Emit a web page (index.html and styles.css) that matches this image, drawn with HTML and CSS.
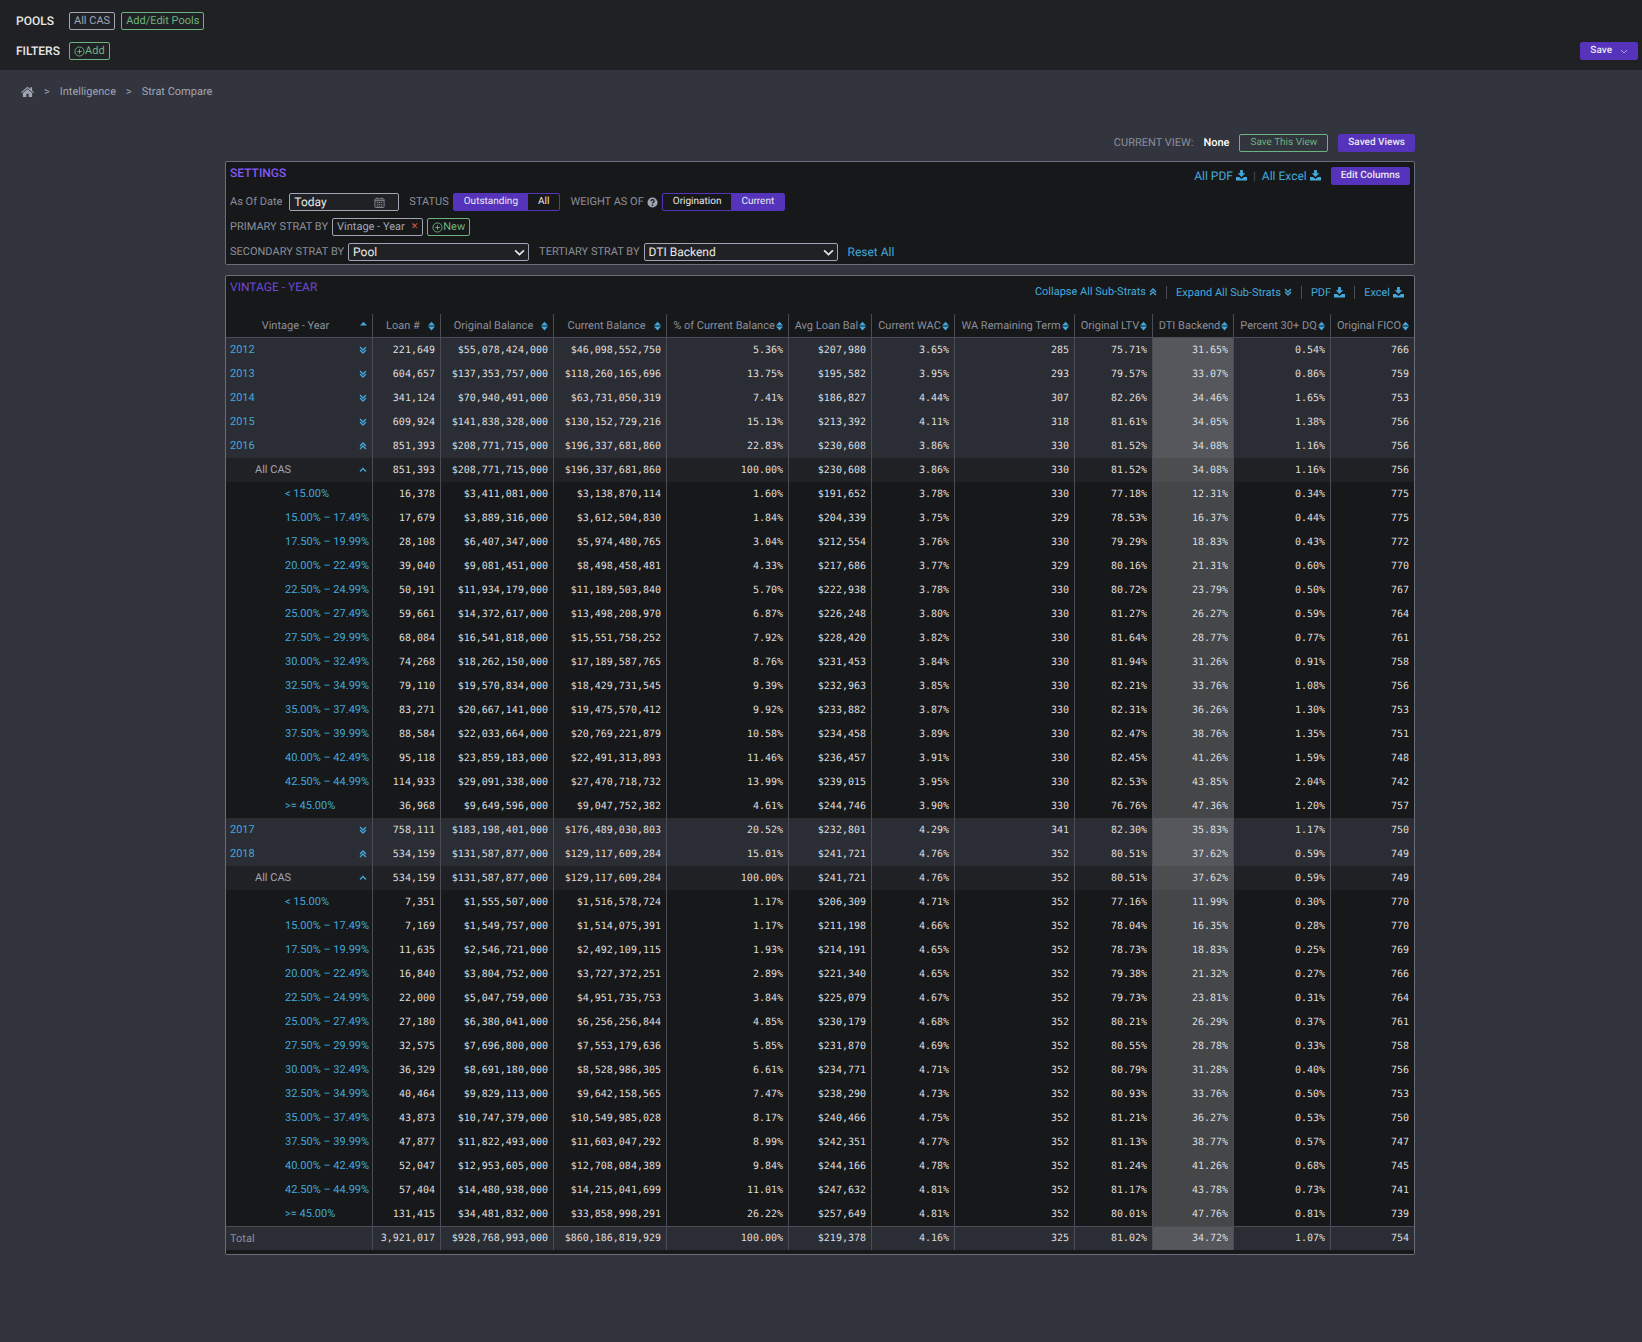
FILE: index.html
```html
<!DOCTYPE html>
<html lang="en">
<head>
    <meta charset="UTF-8">
    <meta name="viewport" content="width=device-width, initial-scale=1.0">
    <title>Strat Compare</title>
    <link rel="stylesheet" href="styles.css">
    <script src="strats.js" defer></script>
</head>
<body>
    <svg class="sprite" aria-hidden="true">
        <symbol id="plus" viewBox="0 0 12 12"><circle cx="6" cy="6" r="5" fill="none" stroke="currentColor"/><path d="M6 3.500v5M3.500 6h5" stroke="currentColor"/></symbol>
        <symbol id="home" viewBox="0 0 14 12"><path d="M7 .3L0 6.200l.8 1L7 2l6.200 5.200.8-1-2.100-1.800V1H10v1.800zM7 3L2 7.200V11.500h3.800V8h2.400v3.500H12V7.200z" fill="currentColor"/></symbol>
        <symbol id="download" viewBox="0 0 12 12"><path d="M4.500 0h3v3.500h2.700L6 7.700 1.800 3.500h2.700zM0 7.500h3.200L6 9.800l2.800-2.300H12v4H0z" fill="currentColor"/></symbol>
        <symbol id="calendar" viewBox="0 0 12 12"><path d="M2 2h8a1 1 0 0 1 1 1v7.500a1 1 0 0 1-1 1H2a1 1 0 0 1-1-1V3a1 1 0 0 1 1-1zM3.500.5v2M8.500.5v2M1 4h10" fill="none" stroke="currentColor"/><path d="M3 6h6M3 8h6M3 10h6" stroke="currentColor" stroke-dasharray="1.600 .6"/></symbol>
        <symbol id="help" viewBox="0 0 12 12"><circle cx="6" cy="6" r="5.500" fill="currentColor"/><path d="M4.300 4.600C4.300 2.400 7.800 2.500 7.800 4.500 7.800 5.800 6 5.700 6 7.200M6 8.200v1.500" fill="none" stroke="#17181a" stroke-width="1.400"/></symbol>
        <symbol id="down" viewBox="0 0 10 10"><path d="M1 3l4 4 4-4" fill="none" stroke="currentColor" stroke-width="1.500"/></symbol>
        <symbol id="down-thin" viewBox="0 0 8 8"><path d="M1 3l3 3 3-3" fill="none" stroke="currentColor"/></symbol>
        <symbol id="up1" viewBox="0 0 8 8"><path d="M1 5.500l3-3 3 3" fill="none" stroke="currentColor" stroke-width="1.300"/></symbol>
        <symbol id="up2" viewBox="0 0 8 8"><path d="M1 4l3-3 3 3M1 7l3-3 3 3" fill="none" stroke="currentColor" stroke-width="1.300"/></symbol>
        <symbol id="down2" viewBox="0 0 8 8"><path d="M1 1l3 3 3-3M1 4l3 3 3-3" fill="none" stroke="currentColor" stroke-width="1.300"/></symbol>
        <symbol id="sort" viewBox="0 0 8 10"><path d="M4 0l4 4.300H0zM4 10L0 5.700h8z" fill="currentColor"/></symbol>
        <symbol id="sort-up" viewBox="0 0 8 10"><path d="M4 0l4 4.300H0z" fill="currentColor"/></symbol>
    </svg>

    <header class="topbar">
        <div class="topbar-row">
            <span class="topbar-label">POOLS</span>
            <button class="btn chip">All CAS</button>
            <button class="btn outline">Add/Edit Pools</button>
        </div>
        <div class="topbar-row">
            <span class="topbar-label">FILTERS</span>
            <button class="btn outline"><svg class="icon"><use href="#plus"/></svg>Add</button>
            <button class="btn solid save">Save <svg class="icon tiny"><use href="#down-thin"/></svg></button>
        </div>
    </header>

    <nav class="breadcrumb">
        <a href="#" aria-label="Home"><svg class="home"><use href="#home"/></svg></a>
        <span>&gt;</span>
        <a href="#">Intelligence</a>
        <span>&gt;</span>
        <a href="#">Strat Compare</a>
    </nav>

    <div class="page">
    <main>
        <div class="view-row">
            <span>CURRENT VIEW:</span>
            <strong>None</strong>
            <button class="btn outline wide">Save This View</button>
            <button class="btn solid">Saved Views</button>
        </div>

        <section class="panel settings">
            <div class="panel-head">
                <h1>SETTINGS</h1>
                <div class="exports">
                    <a href="#">All PDF <svg class="icon"><use href="#download"/></svg></a>
                    <span class="bar">|</span>
                    <a href="#">All Excel <svg class="icon"><use href="#download"/></svg></a>
                    <button class="btn solid">Edit Columns</button>
                </div>
            </div>

            <div class="field-row">
                <div class="field date">
                    <label for="as-of">As Of Date</label>
                    <span class="control">
                        <input id="as-of" type="text" value="Today">
                        <svg class="icon"><use href="#calendar"/></svg>
                    </span>
                </div>
                <fieldset class="field">
                    <legend>STATUS</legend>
                    <span class="toggle">
                        <label><input type="radio" name="status" checked>Outstanding</label>
                        <label><input type="radio" name="status">All</label>
                    </span>
                </fieldset>
                <fieldset class="field">
                    <legend>WEIGHT AS OF <svg class="icon"><use href="#help"/></svg></legend>
                    <span class="toggle">
                        <label><input type="radio" name="weight">Origination</label>
                        <label><input type="radio" name="weight" checked>Current</label>
                    </span>
                </fieldset>
            </div>

            <div class="field-row">
                <div class="field">
                    <span>PRIMARY STRAT BY</span>
                    <button class="btn chip">Vintage - Year <span class="remove">✕</span></button>
                    <button class="btn outline"><svg class="icon"><use href="#plus"/></svg>New</button>
                </div>
            </div>

            <div class="field-row">
                <div class="field">
                    <label for="secondary">SECONDARY STRAT BY</label>
                    <span class="control secondary">
                        <select id="secondary"><option>Pool</option></select>
                        <svg class="icon"><use href="#down"/></svg>
                    </span>
                </div>
                <div class="field">
                    <label for="tertiary">TERTIARY STRAT BY</label>
                    <span class="control tertiary">
                        <select id="tertiary"><option>DTI Backend</option></select>
                        <svg class="icon"><use href="#down"/></svg>
                    </span>
                </div>
                <a class="reset" href="#">Reset All</a>
            </div>
        </section>

        <section class="panel results">
            <div class="panel-head">
                <h2>VINTAGE - YEAR</h2>
                <div class="actions">
                    <a href="#">Collapse All Sub-Strats <svg class="icon tiny"><use href="#up2"/></svg></a>
                    <a href="#">Expand All Sub-Strats <svg class="icon tiny"><use href="#down2"/></svg></a>
                    <a href="#">PDF <svg class="icon"><use href="#download"/></svg></a>
                    <a href="#">Excel <svg class="icon"><use href="#download"/></svg></a>
                </div>
            </div>

            <table>
                <colgroup>
                    <col class="c-name"><col class="c-loan"><col class="c-balance"><col class="c-balance">
                    <col class="c-share"><col class="c-avg"><col class="c-avg"><col class="c-term">
                    <col class="c-ltv"><col class="c-dti"><col class="c-dq"><col class="c-fico">
                </colgroup>
                <thead><tr></tr></thead>
                <tbody></tbody>
                <tfoot></tfoot>
            </table>
        </section>
    </main>
    </div>
</body>
</html>
```
FILE: strats.js
```js
const $ = el => document.querySelector(el)

const columns = ['Vintage - Year', 'Loan #', 'Original Balance', 'Current Balance', '% of Current Balance', 'Avg Loan Bal',
    'Current WAC', 'WA Remaining Term', 'Original LTV', 'DTI Backend', 'Percent 30+ DQ', 'Original FICO']

// type | name | loans | original | current | share | avg | wac | term | ltv | dti | dq | fico
const data = `
year-closed|2012|221,649|55,078,424,000|46,098,552,750|5.36|207,980|3.65|285|75.71|31.65|0.54|766
year-closed|2013|604,657|137,353,757,000|118,260,165,696|13.75|195,582|3.95|293|79.57|33.07|0.86|759
year-closed|2014|341,124|70,940,491,000|63,731,050,319|7.41|186,827|4.44|307|82.26|34.46|1.65|753
year-closed|2015|609,924|141,838,328,000|130,152,729,216|15.13|213,392|4.11|318|81.61|34.05|1.38|756
year-open|2016|851,393|208,771,715,000|196,337,681,860|22.83|230,608|3.86|330|81.52|34.08|1.16|756
pool|All CAS|851,393|208,771,715,000|196,337,681,860|100.00|230,608|3.86|330|81.52|34.08|1.16|756
range|< 15.00%|16,378|3,411,081,000|3,138,870,114|1.60|191,652|3.78|330|77.18|12.31|0.34|775
range|15.00% – 17.49%|17,679|3,889,316,000|3,612,504,830|1.84|204,339|3.75|329|78.53|16.37|0.44|775
range|17.50% – 19.99%|28,108|6,407,347,000|5,974,480,765|3.04|212,554|3.76|330|79.29|18.83|0.43|772
range|20.00% – 22.49%|39,040|9,081,451,000|8,498,458,481|4.33|217,686|3.77|329|80.16|21.31|0.60|770
range|22.50% – 24.99%|50,191|11,934,179,000|11,189,503,840|5.70|222,938|3.78|330|80.72|23.79|0.50|767
range|25.00% – 27.49%|59,661|14,372,617,000|13,498,208,970|6.87|226,248|3.80|330|81.27|26.27|0.59|764
range|27.50% – 29.99%|68,084|16,541,818,000|15,551,758,252|7.92|228,420|3.82|330|81.64|28.77|0.77|761
range|30.00% – 32.49%|74,268|18,262,150,000|17,189,587,765|8.76|231,453|3.84|330|81.94|31.26|0.91|758
range|32.50% – 34.99%|79,110|19,570,834,000|18,429,731,545|9.39|232,963|3.85|330|82.21|33.76|1.08|756
range|35.00% – 37.49%|83,271|20,667,141,000|19,475,570,412|9.92|233,882|3.87|330|82.31|36.26|1.30|753
range|37.50% – 39.99%|88,584|22,033,664,000|20,769,221,879|10.58|234,458|3.89|330|82.47|38.76|1.35|751
range|40.00% – 42.49%|95,118|23,859,183,000|22,491,313,893|11.46|236,457|3.91|330|82.45|41.26|1.59|748
range|42.50% – 44.99%|114,933|29,091,338,000|27,470,718,732|13.99|239,015|3.95|330|82.53|43.85|2.04|742
range|>= 45.00%|36,968|9,649,596,000|9,047,752,382|4.61|244,746|3.90|330|76.76|47.36|1.20|757
year-closed|2017|758,111|183,198,401,000|176,489,030,803|20.52|232,801|4.29|341|82.30|35.83|1.17|750
year-open|2018|534,159|131,587,877,000|129,117,609,284|15.01|241,721|4.76|352|80.51|37.62|0.59|749
pool|All CAS|534,159|131,587,877,000|129,117,609,284|100.00|241,721|4.76|352|80.51|37.62|0.59|749
range|< 15.00%|7,351|1,555,507,000|1,516,578,724|1.17|206,309|4.71|352|77.16|11.99|0.30|770
range|15.00% – 17.49%|7,169|1,549,757,000|1,514,075,391|1.17|211,198|4.66|352|78.04|16.35|0.28|770
range|17.50% – 19.99%|11,635|2,546,721,000|2,492,109,115|1.93|214,191|4.65|352|78.73|18.83|0.25|769
range|20.00% – 22.49%|16,840|3,804,752,000|3,727,372,251|2.89|221,340|4.65|352|79.38|21.32|0.27|766
range|22.50% – 24.99%|22,000|5,047,759,000|4,951,735,753|3.84|225,079|4.67|352|79.73|23.81|0.31|764
range|25.00% – 27.49%|27,180|6,380,041,000|6,256,256,844|4.85|230,179|4.68|352|80.21|26.29|0.37|761
range|27.50% – 29.99%|32,575|7,696,800,000|7,553,179,636|5.85|231,870|4.69|352|80.55|28.78|0.33|758
range|30.00% – 32.49%|36,329|8,691,180,000|8,528,986,305|6.61|234,771|4.71|352|80.79|31.28|0.40|756
range|32.50% – 34.99%|40,464|9,829,113,000|9,642,158,565|7.47|238,290|4.73|352|80.93|33.76|0.50|753
range|35.00% – 37.49%|43,873|10,747,379,000|10,549,985,028|8.17|240,466|4.75|352|81.21|36.27|0.53|750
range|37.50% – 39.99%|47,877|11,822,493,000|11,603,047,292|8.99|242,351|4.77|352|81.13|38.77|0.57|747
range|40.00% – 42.49%|52,047|12,953,605,000|12,708,084,389|9.84|244,166|4.78|352|81.24|41.26|0.68|745
range|42.50% – 44.99%|57,404|14,480,938,000|14,215,041,699|11.01|247,632|4.81|352|81.17|43.78|0.73|741
range|>= 45.00%|131,415|34,481,832,000|33,858,998,291|26.22|257,649|4.81|352|80.01|47.76|0.81|739
total|Total|3,921,017|928,768,993,000|860,186,819,929|100.00|219,378|4.16|325|81.02|34.72|1.07|754
`

const dollars = [1, 2, 4]
const percents = [3, 5, 7, 8, 9]
const toggles = { 'year-closed': 'down2', 'year-open': 'up2', pool: 'up1' }

const icon = (id, cls) => `<svg class="${cls}"><use href="#${id}"/></svg>`

function format(value, i) {
    if (dollars.includes(i)) return '$' + value
    if (percents.includes(i)) return value + '%'
    return value
}

function nameCell(type, name) {
    const text = name.replace('<', '&lt;').replace('>', '&gt;')
    const label = type === 'pool' || type === 'total' ? `<span>${text}</span>` : `<a href="#">${text}</a>`
    const toggle = toggles[type]
        ? `<button class="expander" aria-label="Toggle ${text}">${icon(toggles[type], 'icon tiny')}</button>`
        : ''
    return `<th scope="row"><div class="name">${label}${toggle}</div></th>`
}

$('thead tr').innerHTML = columns.map((name, i) =>
    `<th scope="col"><button class="sort"><span>${name}</span>${icon(i ? 'sort' : 'sort-up', 'sort-icon')}</button></th>`
).join('')

data.trim().split('\n').forEach(line => {
    const [type, name, ...values] = line.split('|')
    const $row = document.createElement('tr')
    $row.className = type.split('-')[0]
    $row.innerHTML = nameCell(type, name) + values.map((v, i) => `<td>${format(v, i)}</td>`).join('')
    $(type === 'total' ? 'tfoot' : 'tbody').appendChild($row)
})
```
FILE: styles.css
```css
* {
    box-sizing: border-box;
}

body {
    margin: 0;
    min-height: 100vh;
    background: #32343e;
    color: #8b8f9b;
    font-family: Roboto, sans-serif;
    font-size: 12px;
    line-height: 16px;
    text-rendering: geometricPrecision;
}

a {
    color: #42a9dc;
    text-decoration: none;
}

button, input, select {
    font: inherit;
    color: inherit;
    text-rendering: inherit;
}

.sprite {
    position: absolute;
    width: 0;
    height: 0;
}

.icon {
    width: 11px;
    height: 11px;
    flex: none;
}

.icon.tiny {
    width: 8px;
    height: 8px;
}

.btn {
    display: inline-flex;
    align-items: center;
    height: 18px;
    padding: 0 4px;
    background: none;
    border: 1px solid;
    border-radius: 2px;
    cursor: pointer;
    white-space: nowrap;

    &.chip {
        color: #a0a4b3;
    }

    &.outline {
        color: #6db380;
    }

    &.wide {
        padding: 0 10px;
        font-size: 10px;
    }

    &.solid {
        padding: 0 9px;
        background: #5633bb;
        border-color: #5633bb;
        color: #e8e8ee;
        font-size: 10px;
        font-weight: 500;
    }
}

/* top bar */

.topbar {
    display: flex;
    flex-direction: column;
    gap: 12px;
    padding: 12px 4px 10px 16px;
    background: #202124;

    .chip, .outline {
        font-size: 11px;
    }
}

.topbar-row {
    display: flex;
    align-items: center;
    gap: 6px;
}

.topbar-label {
    min-width: 47px;
    color: #e8e8e8;
    font-weight: 500;
}

.save {
    gap: 8px;
    margin-left: auto;

    .icon {
        color: #b3a3e3;
    }
}

.breadcrumb {
    display: flex;
    align-items: center;
    gap: 10px;
    padding: 14px 21px 12px;
    font-size: 11px;
    color: #a0a4b3;

    a {
        color: inherit;
    }
}

.home {
    display: block;
    width: 13px;
    height: 12px;
}

/* content */

.page {
    padding: 22px 2px 60px 0;
}

main {
    max-width: 1190px;
    margin: 0 auto;
}

.view-row {
    display: flex;
    justify-content: flex-end;
    align-items: center;
    gap: 10px;
    margin-bottom: 9px;
    font-size: 11px;

    strong {
        color: #fff;
        font-weight: 500;
    }
}

.panel {
    background: #17181a;
    border: 1px solid #696d79;
    border-radius: 2px;
}

.panel-head {
    display: flex;
    justify-content: space-between;
}

h1, h2 {
    margin: 0;
    font-size: 12px;
    font-weight: 500;
    line-height: 16px;
    color: #8258f3;
}

h2 {
    color: #7049d1;
    font-weight: 400;
}

.settings {
    display: flex;
    flex-direction: column;
    gap: 7px;
    padding: 3px 4px;
    margin-bottom: 10px;
}

.exports {
    display: flex;
    align-items: center;
    gap: 6px;
    height: 21px;

    a {
        display: flex;
        align-items: center;
        gap: 3px;
    }

    .btn {
        margin-left: 4px;
    }
}

.bar {
    color: #4a4d58;
}

.field-row {
    display: flex;
    align-items: center;
    gap: 10px;
    height: 18px;
    font-size: 11px;
}

.field {
    display: flex;
    align-items: center;
    gap: 4px;
    margin: 0;
    padding: 0;
    border: 0;
}

.date {
    gap: 7px;
}

legend {
    display: flex;
    align-items: center;
    gap: 3px;
    float: left;
    padding: 0;

    .icon {
        color: #a0a4b3;
    }
}

.control {
    position: relative;
    display: block;
    width: 110px;
    color: #e8e8e8;

    input, select {
        display: block;
        width: 100%;
        height: 18px;
        padding: 0 4px;
        background: #202124;
        border: 1px solid #a0a4b3;
        border-radius: 2px;
        appearance: none;
        font-size: 12px;
    }

    .icon {
        position: absolute;
        top: 4px;
        right: 4px;
        pointer-events: none;
    }
}

.date .icon {
    right: 14px;
    color: #8b8f9b;
}

.secondary {
    width: 181px;
}

.tertiary {
    width: 194px;
}

.toggle {
    display: flex;
    border: 1px solid #5633bb;
    border-radius: 2px;
    color: #e8e8ee;
    font-size: 10px;

    label {
        padding: 0 10px;
        cursor: pointer;
    }

    label:has(:checked) {
        background: #5633bb;
    }

    input {
        position: absolute;
        appearance: none;
        margin: 0;
    }
}

.remove {
    margin-left: 6px;
    color: #e0594b;
    font-size: 9px;
}

.reset {
    font-size: 12px;
}

.results .panel-head {
    padding: 3px 10px 3px 4px;
}

.actions {
    display: flex;
    align-items: center;
    height: 26px;
    font-size: 11px;

    a {
        display: flex;
        align-items: center;
        gap: 3px;
    }

    a + a {
        margin-left: 9px;
        padding-left: 9px;
        border-left: 1px solid #4a4d58;
        line-height: 13px;
    }
}

/* strat table */

table {
    width: 100%;
    margin-top: 6px;
    margin-bottom: 4px;
    table-layout: fixed;
    border-collapse: separate;
    border-spacing: 0;
}

.c-name { width: 146px; }
.c-loan { width: 68px; }
.c-balance { width: 113px; }
.c-share { width: 122px; }
.c-avg { width: 83px; }
.c-term { width: 120px; }
.c-ltv { width: 78px; }
.c-dti { width: 81px; }
.c-dq { width: 97px; }
.c-fico { width: 84px; }

th, td {
    height: 24px;
    padding: 0 5px;
    white-space: nowrap;
}

th {
    font-weight: 400;
    font-size: 11px;
    text-align: left;
}

td {
    padding-top: 1px;
    color: #dedede;
    font-family: "DejaVu Sans Mono", monospace;
    font-size: 10px;
    text-align: right;
}

th + th, td {
    border-left: 1px solid #4a4d58;
}

thead th {
    border-bottom: 1px solid #4a4d58;
}

.sort {
    display: flex;
    align-items: center;
    width: 100%;
    padding: 0;
    background: none;
    border: 0;
    cursor: pointer;

    span {
        flex: 1;
    }
}

.sort-icon {
    width: 7px;
    height: 10px;
    flex: none;
    color: #42a9dc;
}

.name {
    display: flex;
    align-items: center;
    justify-content: space-between;
}

th[scope="row"] {
    padding-left: 4px;
}

.expander {
    display: flex;
    padding: 0;
    background: none;
    border: 0;
    color: #42a9dc;
    cursor: pointer;
}

.year {
    background: #2b2d34;
}

.pool {
    background: #202124;

    .name {
        padding-left: 25px;
        color: #a0a4b3;
    }
}

.range .name {
    padding-left: 55px;
}

.total {
    background: #2b2d34;

    th, td {
        border-top: 1px solid #4a4d58;
    }
}

td:nth-child(10) {
    background: rgba(255, 255, 255, 0.2);
}
```
